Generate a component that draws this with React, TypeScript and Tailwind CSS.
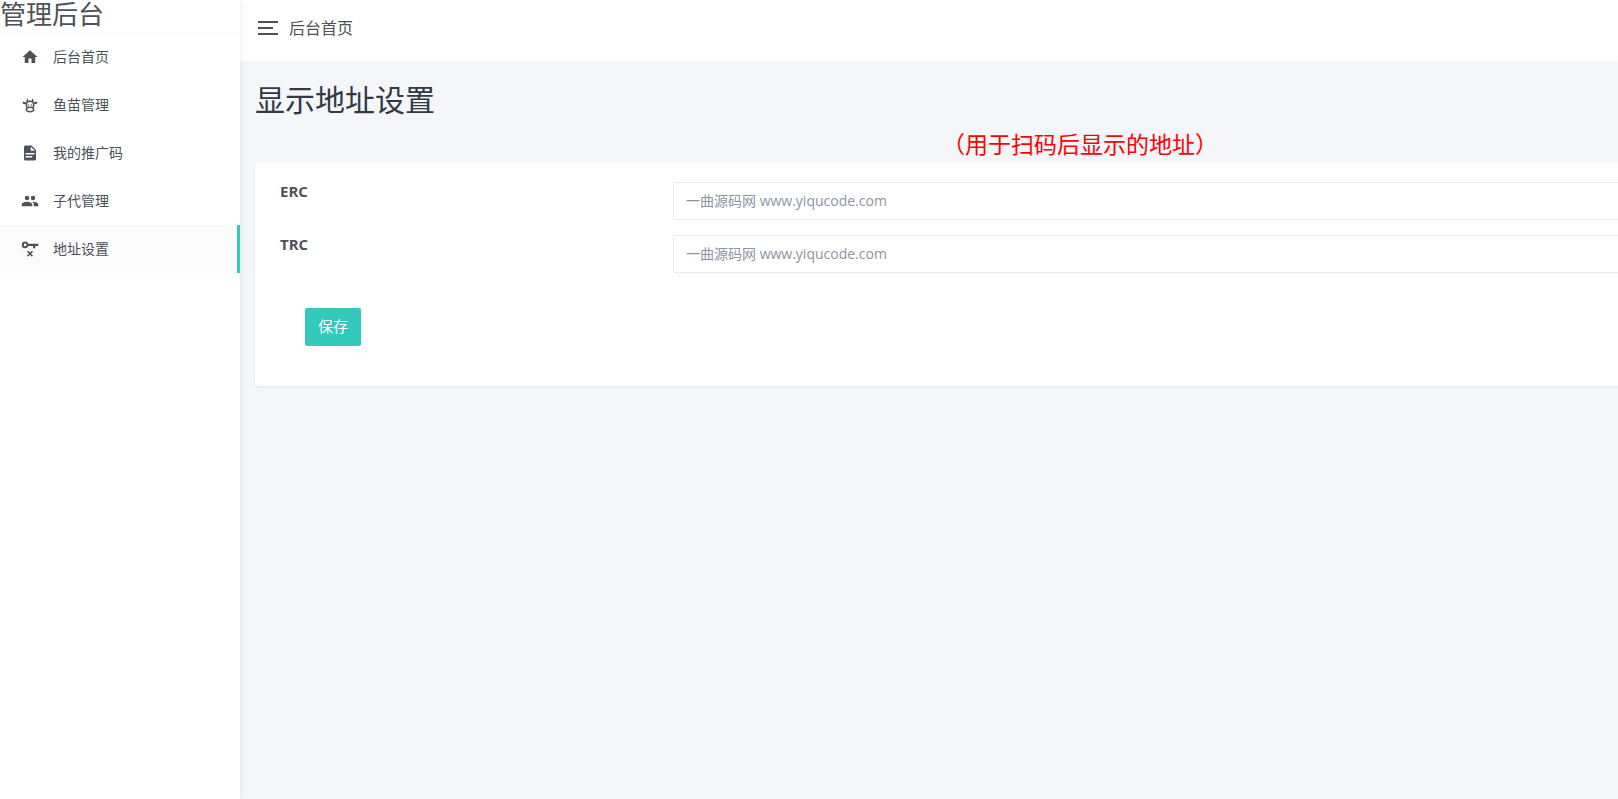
import { useState } from "react";
import type { ReactNode } from "react";

interface NavItem {
  label: string;
  icon: ReactNode;
  active?: boolean;
}

interface AddressField {
  id: string;
  label: string;
}

const NAV_ITEMS: NavItem[] = [
  {
    label: "后台首页",
    icon: <path d="M10 20v-6h4v6h5v-8h3L12 3 2 12h3v8z" />,
  },
  {
    label: "鱼苗管理",
    icon: (
      <path d="M10.5,18A0.5,0.5 0 0,1 11,18.5A0.5,0.5 0 0,1 10.5,19A0.5,0.5 0 0,1 10,18.5A0.5,0.5 0 0,1 10.5,18M13.5,18A0.5,0.5 0 0,1 14,18.5A0.5,0.5 0 0,1 13.5,19A0.5,0.5 0 0,1 13,18.5A0.5,0.5 0 0,1 13.5,18M10,11A1,1 0 0,1 11,12A1,1 0 0,1 10,13A1,1 0 0,1 9,12A1,1 0 0,1 10,11M14,11A1,1 0 0,1 15,12A1,1 0 0,1 14,13A1,1 0 0,1 13,12A1,1 0 0,1 14,11M18,18C18,20.21 15.31,22 12,22C8.69,22 6,20.21 6,18C6,17.1 6.45,16.27 7.2,15.6C6.45,14.6 6,13.35 6,12L6.12,10.78C5.58,10.93 4.93,10.93 4.4,10.78C3.38,10.5 1.84,9.35 2.07,8.55C2.3,7.75 4.21,7.6 5.23,7.9C5.82,8.07 6.45,8.5 6.82,8.96L7.39,8.15C6.79,7.05 7,4 10,3L9.91,3.14C9.63,3.58 8.91,4.97 9.67,6.47C10.39,6.17 11.17,6 12,6C12.83,6 13.61,6.17 14.33,6.47C15.09,4.97 14.37,3.58 14.09,3.14L14,3C17,4 17.21,7.05 16.61,8.15L17.18,8.96C17.55,8.5 18.18,8.07 18.77,7.9C19.79,7.6 21.7,7.75 21.93,8.55C22.16,9.35 20.62,10.5 19.6,10.78C19.07,10.93 18.42,10.93 17.88,10.78L18,12C18,13.35 17.55,14.6 16.8,15.6C17.55,16.27 18,17.1 18,18M12,16C9.79,16 8,16.9 8,18C8,19.1 9.79,20 12,20C14.21,20 16,19.1 16,18C16,16.9 14.21,16 12,16M12,14C13.12,14 14.17,14.21 15.07,14.56C15.65,13.87 16,13 16,12A4,4 0 0,0 12,8A4,4 0 0,0 8,12C8,13 8.35,13.87 8.93,14.56C9.83,14.21 10.88,14 12,14Z" />
    ),
  },
  {
    label: "我的推广码",
    icon: (
      <path d="M13 9h5.500L13 3.500V9M6 2h8l6 6v12a2 2 0 0 1-2 2H6a2 2 0 0 1-2-2V4c0-1.110.89-2 2-2m9 16v-2H6v2h9m3-4v-2H6v2h12z" />
    ),
  },
  {
    label: "子代管理",
    icon: (
      <path d="M16 13c-.29 0-.62.02-.97.05 1.160.84 1.970 1.960 1.970 3.450V19h6v-2.500c0-2.330-4.670-3.500-7-3.500m-8 0c-2.330 0-7 1.170-7 3.500V19h14v-2.500c0-2.330-4.670-3.500-7-3.500m0-2a3 3 0 0 0 3-3 3 3 0 0 0-3-3 3 3 0 0 0-3 3 3 3 0 0 0 3 3m8 0a3 3 0 0 0 3-3 3 3 0 0 0-3-3 3 3 0 0 0-3 3 3 3 0 0 0 3 3z" />
    ),
  },
  {
    label: "地址设置",
    icon: (
      <path
        fillRule="evenodd"
        d="M5.500 2a4.500 4.500 0 0 0 0 9c2 0 3.600-1.200 4.200-3H16v3h3V8h4V5H9.700C9.100 3.200 7.500 2 5.500 2m0 2.700a1.800 1.800 0 1 1 0 3.600 1.800 1.800 0 0 1 0-3.600M9.400 14.200 8 15.600l2.600 2.600L8 20.800l1.400 1.400 2.600-2.600 2.600 2.600 1.400-1.400-2.600-2.600 2.600-2.600-1.400-1.400-2.600 2.600z"
      />
    ),
    active: true,
  },
];

const ADDRESS_FIELDS: AddressField[] = [
  { id: "erc", label: "ERC" },
  { id: "trc", label: "TRC" },
];

function Sidebar() {
  return (
    <aside className="relative z-10 w-60 shrink-0 bg-white shadow-[0_0_5px_rgba(0,0,0,0.1)]">
      <div className="-mb-px h-[34px] border-b border-[#f8f8f9] text-[26px] leading-7">管理后台</div>
      <nav>
        {NAV_ITEMS.map((item) => (
          <a
            key={item.label}
            href="#"
            aria-current={item.active ? "page" : undefined}
            className={
              item.active
                ? "flex h-12 items-center gap-3.5 border-r-3 border-[#33cabb] bg-[#fbfbfb] pl-[21px] text-sm"
                : "flex h-12 items-center gap-3.5 pl-[21px] text-sm"
            }
          >
            <svg viewBox="0 0 24 24" className="size-[18px] fill-current" aria-hidden="true">
              {item.icon}
            </svg>
            {item.label}
          </a>
        ))}
      </nav>
    </aside>
  );
}

function Topbar() {
  return (
    <header className="flex h-[62px] items-center gap-[11px] bg-white px-[18px] pb-1.5 shadow-[0_1px_2px_rgba(0,0,0,0.02)]">
      <button type="button" aria-label="切换菜单" className="flex flex-col gap-1">
        <span className="h-0.5 w-5 bg-[#4d5259]" />
        <span className="h-0.5 w-[15px] bg-[#4d5259]" />
        <span className="h-0.5 w-5 bg-[#4d5259]" />
      </button>
      <span className="text-base">后台首页</span>
    </header>
  );
}

function AddressForm() {
  const [values, setValues] = useState<Record<string, string>>({});

  return (
    <form
      className="rounded-sm bg-white px-[25px] pt-5 pb-10 shadow-[0_1px_3px_rgba(0,0,0,0.08)]"
      onSubmit={(e) => e.preventDefault()}
    >
      <div className="space-y-[15px]">
        {ADDRESS_FIELDS.map((field) => (
          <div key={field.id} className="flex items-start">
            <label htmlFor={field.id} className="w-[393px] shrink-0 text-[15px] leading-[18px] font-bold">
              {field.label}
            </label>
            <input
              id={field.id}
              type="text"
              placeholder="一曲源码网 www.yiqucode.com"
              value={values[field.id] ?? ""}
              onChange={(e) => setValues({ ...values, [field.id]: e.target.value })}
              className="h-[38px] min-w-0 flex-1 rounded-xs border border-[#ebebeb] px-3 pb-0.5 text-sm outline-none placeholder:text-[#8b95a5]"
            />
          </div>
        ))}
      </div>
      <button
        type="submit"
        className="mt-[35px] ml-[25px] h-[38px] rounded-xs bg-[#33cabb] px-[13px] pb-0.5 text-[15px] text-white"
      >
        保存
      </button>
    </form>
  );
}

export default function App() {
  return (
    <div className="flex min-h-screen overflow-hidden bg-[#f5f6fa] font-['Open_Sans','Noto_Sans_CJK_SC',sans-serif] text-[#4d5259]">
      <Sidebar />
      <div className="min-w-0 flex-1">
        <Topbar />
        {/* the form is laid out for wide screens and runs past narrow ones */}
        <main className="min-w-[1680px] p-[15px]">
          <h1 className="pt-[5px] text-3xl leading-9 text-[#313944]">显示地址设置</h1>
          <p className="pt-3 pb-[3px] text-center text-[23px] leading-[29px] text-[#ff0000]">（用于扫码后显示的地址）</p>
          <AddressForm />
        </main>
      </div>
    </div>
  );
}
